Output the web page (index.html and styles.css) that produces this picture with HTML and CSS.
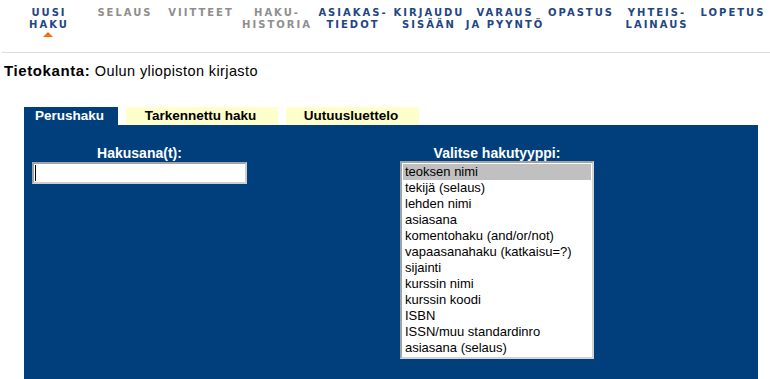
FILE: index.html
```html
<!DOCTYPE html>
<html lang="fi">
<head>
<meta charset="utf-8">
<title>Uusi haku</title>
<link rel="stylesheet" href="styles.css">
</head>
<body>
<nav class="topnav">
  <a class="nav-item active" href="#"><span>UUSI<br>HAKU</span><i class="marker"></i></a>
  <span class="nav-item off"><span>SELAUS</span></span>
  <span class="nav-item off"><span>VIITTEET</span></span>
  <span class="nav-item off"><span>HAKU-<br>HISTORIA</span></span>
  <a class="nav-item" href="#"><span>ASIAKAS-<br>TIEDOT</span></a>
  <a class="nav-item" href="#"><span>KIRJAUDU<br>SISÄÄN</span></a>
  <a class="nav-item" href="#"><span>VARAUS<br>JA PYYNTÖ</span></a>
  <a class="nav-item" href="#"><span>OPASTUS</span></a>
  <a class="nav-item" href="#"><span>YHTEIS-<br>LAINAUS</span></a>
  <a class="nav-item" href="#"><span>LOPETUS</span></a>
</nav>

<p class="database"><b>Tietokanta:</b> Oulun yliopiston kirjasto</p>

<div class="tabs">
  <div class="tab current tab-1">Perushaku</div>
  <div class="tab tab-2">Tarkennettu haku</div>
  <div class="tab tab-3">Uutuusluettelo</div>
</div>

<section class="panel">
  <div class="field field-term">
    <div class="label">Hakusana(t):</div>
    <div class="textbox"><span class="caret"></span></div>
  </div>
  <div class="field field-type">
    <div class="label">Valitse hakutyyppi:</div>
    <div class="listbox">
      <div class="option selected">teoksen nimi</div>
      <div class="option">tekijä (selaus)</div>
      <div class="option">lehden nimi</div>
      <div class="option">asiasana</div>
      <div class="option">komentohaku (and/or/not)</div>
      <div class="option">vapaasanahaku (katkaisu=?)</div>
      <div class="option">sijainti</div>
      <div class="option">kurssin nimi</div>
      <div class="option">kurssin koodi</div>
      <div class="option">ISBN</div>
      <div class="option">ISSN/muu standardinro</div>
      <div class="option">asiasana (selaus)</div>
    </div>
  </div>
</section>
</body>
</html>
```

FILE: styles.css
```css
html, body {
  margin: 0;
  padding: 0;
  background: #ffffff;
  overflow: hidden;
}
body {
  font-family: "Liberation Sans", Arial, sans-serif;
  color: #000;
}

/* top navigation */
.topnav {
  display: grid;
  grid-template-columns: repeat(10, 76px);
  height: 45px;
  margin-left: 2px;
  padding: 7px 0 0 8px;
  border-bottom: 1px solid #dcdcdc;
}
.nav-item {
  display: flex;
  flex-direction: column;
  align-items: center;
  text-decoration: none;
  font-family: "DejaVu Sans", sans-serif;
  font-weight: bold;
  font-size: 10px;
  line-height: 12px;
  letter-spacing: 2px;
  color: #1f4682;
  text-align: center;
  white-space: nowrap;
}
.nav-item > span {
  margin-right: -2px;
}
.nav-item.off {
  color: #8e8e8e;
}
.marker {
  display: block;
  width: 0;
  height: 0;
  margin-top: 1px;
  border-left: 5px solid transparent;
  border-right: 5px solid transparent;
  border-bottom: 5px solid #f07010;
}

/* database line */
.database {
  margin: 10px 0 0 4px;
  font-size: 14.5px;
  line-height: 16px;
  letter-spacing: 0.4px;
}
.database b {
  font-size: 15px;
  letter-spacing: 0.6px;
}

/* tabs */
.tabs {
  display: flex;
  gap: 8px;
  margin: 28px 0 0 24px;
}
.tab {
  height: 18px;
  line-height: 18px;
  font-size: 13.5px;
  font-weight: bold;
  text-align: center;
  padding-right: 3px;
  box-sizing: border-box;
  background: #ffffcc;
  color: #000;
}
.tab.current {
  background: #003f7b;
  color: #fff;
}
.tab-1 { width: 94px; }
.tab-2 { width: 152px; }
.tab-3 { width: 133px; }

/* panel */
.panel {
  display: flex;
  gap: 153px;
  margin-left: 24px;
  width: 734px;
  box-sizing: border-box;
  padding: 20px 0 40px 8px;
  background: #003f7b;
}
.field {
  display: flex;
  flex-direction: column;
}
.label {
  color: #fff;
  font-size: 14px;
  font-weight: bold;
  line-height: 16px;
  text-align: center;
}
.field-term { width: 215px; }
.field-type { width: 194px; }

.textbox {
  margin-top: 1px;
  height: 22px;
  box-sizing: border-box;
  background: #fff;
  border: 2px solid #a3a3a3;
  border-right-color: #cfcfcf;
  border-bottom-color: #cfcfcf;
  padding: 1px 0 0 1px;
}
.caret {
  display: block;
  width: 1px;
  height: 16px;
  background: #000;
}

.listbox {
  height: 198px;
  box-sizing: border-box;
  background: #fff;
  border: 2px solid #a3a3a3;
  border-right-color: #d4d4d4;
  border-bottom-color: #d4d4d4;
  padding: 1px;
}
.option {
  height: 16px;
  line-height: 16px;
  font-size: 13px;
  padding-left: 2px;
  color: #000;
  white-space: nowrap;
}
.option.selected {
  background: #c0c0c0;
}
```
